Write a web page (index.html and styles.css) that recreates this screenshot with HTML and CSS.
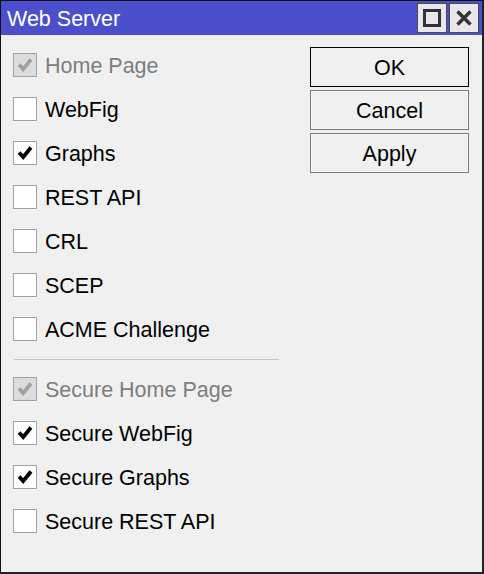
FILE: index.html
```html
<!DOCTYPE html>
<html>
<head>
<meta charset="utf-8">
<link rel="stylesheet" href="styles.css">
</head>
<body>
<div class="window">
  <div class="titlebar">
    <span class="title">Web Server</span>
    <div class="tb-buttons">
      <div class="tb-btn"><span class="max-icon"></span></div>
      <div class="tb-btn">
        <svg width="16" height="16" viewBox="0 0 16 16"><path d="M1.5 1.5 L14.5 14.5 M14.5 1.5 L1.5 14.5" stroke="#333" stroke-width="3.4" fill="none"/></svg>
      </div>
    </div>
  </div>
  <div class="content">
    <div class="options">
      <div class="row disabled"><span class="cb checked"><svg viewBox="0 0 24 24"><polyline points="5.5,11.5 10,16.5 18.5,6"/></svg></span><span class="label">Home Page</span></div>
      <div class="row"><span class="cb"></span><span class="label">WebFig</span></div>
      <div class="row"><span class="cb checked"><svg viewBox="0 0 24 24"><polyline points="5.5,11.5 10,16.5 18.5,6"/></svg></span><span class="label">Graphs</span></div>
      <div class="row"><span class="cb"></span><span class="label">REST API</span></div>
      <div class="row"><span class="cb"></span><span class="label">CRL</span></div>
      <div class="row"><span class="cb"></span><span class="label">SCEP</span></div>
      <div class="row"><span class="cb"></span><span class="label">ACME Challenge</span></div>
      <div class="separator"></div>
      <div class="row disabled"><span class="cb checked"><svg viewBox="0 0 24 24"><polyline points="5.5,11.5 10,16.5 18.5,6"/></svg></span><span class="label">Secure Home Page</span></div>
      <div class="row"><span class="cb checked"><svg viewBox="0 0 24 24"><polyline points="5.5,11.5 10,16.5 18.5,6"/></svg></span><span class="label">Secure WebFig</span></div>
      <div class="row"><span class="cb checked"><svg viewBox="0 0 24 24"><polyline points="5.5,11.5 10,16.5 18.5,6"/></svg></span><span class="label">Secure Graphs</span></div>
      <div class="row"><span class="cb"></span><span class="label">Secure REST API</span></div>
    </div>
    <div class="actions">
      <div class="btn default">OK</div>
      <div class="btn">Cancel</div>
      <div class="btn">Apply</div>
    </div>
  </div>
</div>
</body>
</html>
```
FILE: styles.css
```css
html, body {
  margin: 0;
  padding: 0;
  background: #f0f0f0;
}
.window {
  width: 484px;
  height: 574px;
  box-sizing: border-box;
  border: 1px solid #111;
  border-right: 2px solid #222;
  border-bottom: 2px solid #222;
  background: #f0f0f0;
  font-family: "Liberation Sans", Arial, sans-serif;
  font-size: 21.5px;
  color: #000;
  display: flex;
  flex-direction: column;
}
.titlebar {
  height: 34px;
  background: #4b4fcc;
  display: flex;
  align-items: center;
  justify-content: space-between;
  padding: 0 3px 0 6px;
}
.title {
  color: #fff;
  font-size: 21.5px;
  padding-top: 3px;
}
.tb-buttons {
  display: flex;
  gap: 2px;
}
.tb-btn {
  width: 30px;
  height: 30px;
  box-sizing: border-box;
  background: #e9e5ea;
  border: 1px solid #4a4a4a;
  display: flex;
  align-items: center;
  justify-content: center;
}
.max-icon {
  width: 18px;
  height: 18px;
  box-sizing: border-box;
  border: 3px solid #333;
}
.content {
  display: flex;
  padding: 8px 13px 0 12px;
}
.options {
  width: 266px;
  display: flex;
  flex-direction: column;
}
.row {
  height: 44px;
  display: flex;
  align-items: center;
  gap: 8px;
}
.label {
  padding-top: 2px;
}
.cb {
  width: 24px;
  height: 24px;
  box-sizing: border-box;
  border: 1px solid #a3a3a3;
  background: #fff;
  display: flex;
  align-items: center;
  justify-content: center;
}
.cb svg {
  width: 22px;
  height: 22px;
}
.cb polyline {
  fill: none;
  stroke: #000;
  stroke-width: 4.2;
  stroke-linejoin: miter;
}
.row.disabled .cb {
  background: #dcdcdc;
}
.row.disabled polyline {
  stroke: #a0a0a0;
}
.row.disabled .label {
  color: #7d7d7d;
}
.separator {
  height: 1px;
  background: #c4c4c4;
  margin: 8px 0 7px 1px;
}
.actions {
  margin-left: auto;
  padding-top: 4px;
  display: flex;
  flex-direction: column;
  gap: 3px;
}
.btn {
  width: 159px;
  height: 40px;
  box-sizing: border-box;
  padding-top: 2px;
  border: 1px solid #7a7a7a;
  box-shadow: inset 0 0 0 1px #f8f8f8;
  background: #f0f0f0;
  display: flex;
  align-items: center;
  justify-content: center;
}
.btn.default {
  border-color: #000;
  box-shadow: none;
}
```
